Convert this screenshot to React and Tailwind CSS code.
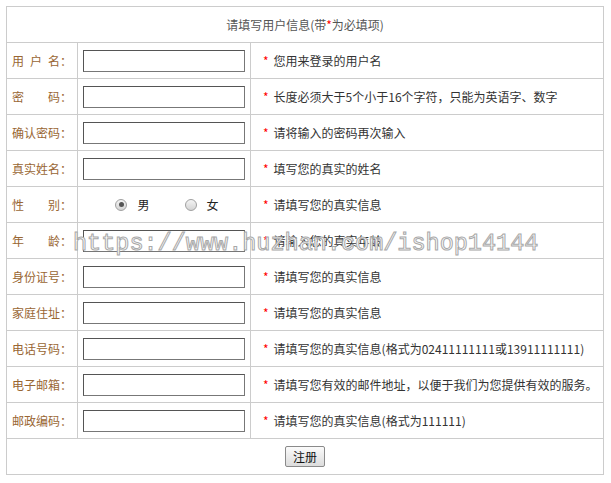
const rows = [
  { label: ['用', '户', '名'], kind: 'input', tip: '您用来登录的用户名' },
  { label: ['密', '码'], kind: 'input', tip: '长度必须大于5个小于16个字符，只能为英语字、数字' },
  { label: ['确认密码'], kind: 'input', tip: '请将输入的密码再次输入' },
  { label: ['真实姓名'], kind: 'input', tip: '填写您的真实的姓名' },
  { label: ['性', '别'], kind: 'radio', tip: '请填写您的真实信息' },
  { label: ['年', '龄'], kind: 'input', tip: '请输入您的真实年龄' },
  { label: ['身份证号'], kind: 'input', tip: '请填写您的真实信息' },
  { label: ['家庭住址'], kind: 'input', tip: '请填写您的真实信息' },
  { label: ['电话号码'], kind: 'input', tip: '请填写您的真实信息(格式为02411111111或13911111111)' },
  { label: ['电子邮箱'], kind: 'input', tip: '请填写您有效的邮件地址，以便于我们为您提供有效的服务。' },
  { label: ['邮政编码'], kind: 'input', tip: '请填写您的真实信息(格式为111111)' },
]

function Radio({ checked, text }) {
  return (
    <label className="flex items-center">
      <span className="w-[12px] h-[12px] rounded-full border border-[#a0a0a0] bg-gradient-to-b from-[#f4f4f4] to-[#d4d4d4] flex items-center justify-center">
        {checked && <span className="w-[5px] h-[5px] rounded-full bg-[#555]" />}
      </span>
      <span className="ml-[10px] text-[#222]">{text}</span>
    </label>
  )
}

export default function App() {
  return (
    <div className="relative w-[611px] h-[483px] bg-white text-[12px] font-['Noto_Sans_CJK_SC',sans-serif] pt-[6px] pl-[6px]">
      <div className="w-[598px] border border-[#cccccc]">
        {/* Header */}
        <div className="h-[36px] border-b border-[#cccccc] flex items-center justify-center text-[#555]">
          请填写用户信息(带<span className="text-[#ff0000]">*</span>为必填项)
        </div>

        {rows.map((r, i) => (
          <div key={i} className="h-[36px] flex border-b border-[#cccccc]">
            <div className="w-[71px] border-r border-[#cccccc] flex items-center pl-[5px] text-[#996633]">
              <div className={`w-[48px] flex ${r.label.length > 1 ? 'justify-between' : ''}`}>
                {r.label.map((c, j) => <span key={j}>{c}</span>)}
              </div>
              <span>：</span>
            </div>
            <div className="w-[173px] border-r border-[#cccccc] flex items-center justify-center">
              {r.kind === 'input' ? (
                <input className="w-[162px] h-[22px] border border-[#777] border-t-[#555] border-l-[#555] outline-none" />
              ) : (
                <div className="flex items-center gap-[35px] pl-[6px]">
                  <Radio checked text="男" />
                  <Radio text="女" />
                </div>
              )}
            </div>
            <div className="flex-1 flex items-center pl-[12px] whitespace-nowrap text-[#333]">
              <span className="text-[#ff0000] mr-[5px]">*</span>
              {r.tip}
            </div>
          </div>
        ))}

        {/* Submit row */}
        <div className="h-[35px] flex items-center justify-center">
          <button className="w-[40px] h-[21px] border border-[#8a8a8a] rounded-[2px] bg-gradient-to-b from-[#fbfbfb] to-[#dcdcdc] text-[12px] text-[#111] leading-none">
            注册
          </button>
        </div>
      </div>

      {/* Watermark overlay */}
      <div className="absolute left-[73px] top-[232px] leading-none text-[23.5px] font-['Liberation_Mono',monospace] text-white [-webkit-text-stroke:1px_#a8a8a8] whitespace-nowrap pointer-events-none">
        https://www.huzhan.com/ishop14144
      </div>
    </div>
  )
}
